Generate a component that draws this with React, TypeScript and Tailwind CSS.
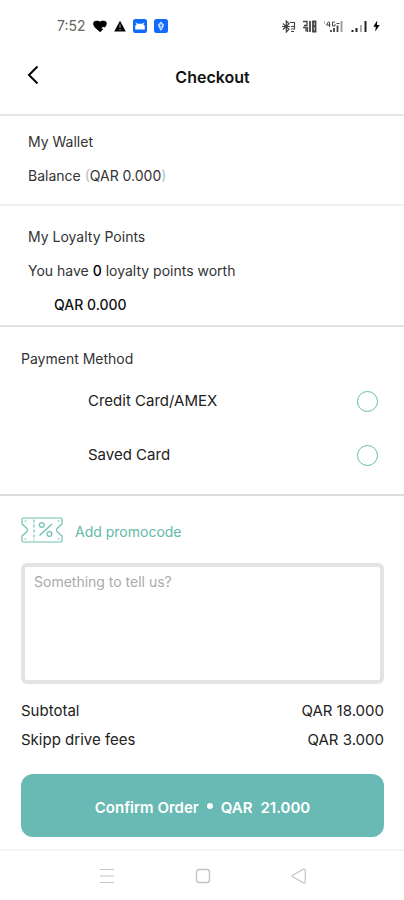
import { useState } from "react";

const methods = ["Credit Card/AMEX", "Saved Card"];

const fees = [
    { label: "Subtotal", value: "QAR 18.000" },
    { label: "Skipp drive fees", value: "QAR 3.000" },
];

// {Phone status bar}
const StatusBar = () => (
    <div className="flex h-[52px] items-center justify-between pl-[57px] pr-6 text-black">
        <div className="flex items-center gap-[7px]">
            <span className="text-sm leading-5 text-[#666]">7:52</span>

            <svg className="h-[13px] w-[14px]" viewBox="0 0 14 13" fill="currentColor">
                <path d="M7 1.800C8 .6 9 .8 10 .8 12.500.6 13.800 1.800 13.800 3.500 13.600 5.500 12.500 6.500 11.500 7.500L9.800 6.800 8.200 8.400 10.500 8.800 7.200 12.200 3.500 9C1.500 7.200 0 5.500.2 3.500.4 1.500 1.800.8 4 .8 5 .8 6 .8 7 1.800z" />
            </svg>

            <svg className="h-[12px] w-[12px]" viewBox="0 0 12 12">
                <path d="M6 .8 11.800 11.400H.2z" fill="currentColor" />
                <path d="M6 4.500v3.300M6 9v1.200" stroke="#bbb" strokeWidth="1" />
            </svg>

            <svg className="h-[14px] w-[14px]" viewBox="0 0 14 14">
                <rect width="14" height="14" rx="2.500" fill="#0f6bfd" />
                <path d="M2.200 10.500V6.800L3.600 5.400 2.400 3.600 5 4.700h4L11.600 3.600 10.400 5.400l1.400 1.400v3.700z" fill="#fff" />
            </svg>

            <svg className="h-[14px] w-[14px]" viewBox="0 0 14 14">
                <rect width="14" height="14" rx="2.500" fill="#0f6bfd" />
                <path d="M7 2.500 10.200 6 7.500 11.500h-1L3.800 6z" fill="#d9e8ff" />
                <path d="M7 4.500v5M5.500 6.300h3" stroke="#0f6bfd" strokeWidth=".8" />
            </svg>
        </div>

        <div className="flex items-center gap-[6px]">
            <svg className="h-[13px] w-[14px]" viewBox="0 0 14 13" fill="none" stroke="#444" strokeWidth="1.200">
                <path d="M1 3.500 7 9.200 4.300 12V1L7 3.800 1 9.500M0 6.500h8M8 2.500h4.500v4H9M9 9h3.500V6.500M9 11.500h3" />
            </svg>

            <svg className="h-[13px] w-[15px]" viewBox="0 0 15 13" fill="none" stroke="#444">
                <path d="M1 1.500h4v4H2M1 7.500h3v4M5.500 7v5" strokeWidth="1.300" />
                <path d="M8 1v11" strokeWidth="1.800" />
                <path d="M11 1.500h2.500v10H11zM11 6.200h3" strokeWidth="1.800" />
            </svg>

            <svg className="h-[13px] w-[22px]" viewBox="0 0 22 13" fill="none" stroke="#444">
                <path d="M5.500 1.500 3.500 5h4M6.500 2v5M12 2H9.500v4H12V4M13.500 3.500h3" strokeWidth="1" />
                <path d="M8 12v-2M11 12V8M14.500 12V5.500" strokeWidth="1.800" />
                <path d="M18.500 12V1" stroke="#999" strokeWidth="1.800" />
                <path d="M1.500 1v3" stroke="#bbb" strokeWidth="1" />
            </svg>

            <svg className="h-[13px] w-[16px]" viewBox="0 0 16 13" fill="none" stroke="#222" strokeWidth="2">
                <path d="M1.500 12v-2M5.500 12V8M14.500 12V1" />
                <path d="M10 12V5" stroke="#aaa" />
            </svg>

            <svg className="h-[12px] w-[7px]" viewBox="0 0 7 12" fill="currentColor">
                <path d="M4.200.5.3 6.700h2.500L2.200 11.500 6.700 5H4z" />
            </svg>
        </div>
    </div>
);

const TicketIcon = () => (
    <svg className="h-[26px] w-[42px]" viewBox="0 0 42 26" fill="none" stroke="#6fc2b0" strokeWidth="1.200">
        <path d="M2.500 1h37q1.500 0 1.500 1.500V7l-5 4.500q-1.200 1.500 0 3L41 19v4.500q0 1.500-1.500 1.500h-37Q1 25 1 23.500V19l5-4.500q1.200-1.500 0-3L1 7V2.500Q1 1 2.500 1z" />
        <path d="M13 2.500v21" strokeDasharray="3 2" />
        <path d="M31 7 18.500 18.500" strokeWidth="1.400" />
        <circle cx="20.800" cy="8" r="2.400" />
        <circle cx="28.500" cy="17" r="2.400" />
        <path d="M3.500 4h2M36.500 4h2M3.500 22h2M36.500 22h2" strokeWidth="1" />
    </svg>
);

const App = () => {
    const [method, setMethod] = useState("");
    const [note, setNote] = useState("");

    return (
        <div className="min-h-screen w-full bg-white font-['Inter',sans-serif] text-sm leading-5 text-[#333]">

            <StatusBar />

            {/* {Header} */}
            <header className="grid h-16 grid-cols-[1fr_auto_1fr] items-center border-b-2 border-[#e6e6e6] pb-3 pl-[27px] pr-1.5">
                <button aria-label="Back" className="justify-self-start pb-1 text-black">
                    <svg className="h-5 w-3" viewBox="0 0 12 20" fill="none" stroke="currentColor" strokeWidth="2">
                        <path d="M10.500 1.500 2 10l8.500 8.500" />
                    </svg>
                </button>
                <h1 className="text-base font-semibold leading-5 text-[#111]">Checkout</h1>
            </header>

            {/* {Wallet} */}
            <section className="flex flex-col gap-3.5 border-b-2 border-[#f0f0f0] px-7 pb-[18px] pt-4">
                <h2>My Wallet</h2>
                <p>Balance <span className="text-[#bbb]">(</span>QAR 0.000<span className="text-[#bbb]">)</span></p>
            </section>

            {/* {Loyalty} */}
            <section className="flex flex-col gap-3.5 border-b-2 border-[#e2e2e2] px-7 pb-2.5 pt-[21px]">
                <h2>My Loyalty Points</h2>
                <p>You have <span className="font-medium text-black">0</span> loyalty points worth</p>
                <p className="pl-[26px] font-medium text-[#111]">QAR 0.000</p>
            </section>

            {/* {Payment} */}
            <fieldset className="border-b-2 border-[#dcdcdc] px-[21px] pb-3 pt-[22px]">
                <legend className="float-left mb-[5px] w-full">Payment Method</legend>
                <div className="clear-both">
                    {methods.map((name) => (
                        <label key={name} className="flex h-[54px] items-center justify-between pl-[67px] pr-[5px] text-[15px] text-[#222]">
                            {name}
                            <input
                                type="radio"
                                name="method"
                                value={name}
                                checked={method === name}
                                onChange={() => setMethod(name)}
                                className="size-[21px] appearance-none rounded-full border border-[#62bfa6] checked:border-[6px]"
                            />
                        </label>
                    ))}
                </div>
            </fieldset>

            <div className="pl-[21px] pr-5 pt-[21px]">
                {/* {Promocode} */}
                <button className="flex items-center gap-3 text-[#62b9a8]">
                    <TicketIcon />
                    <span className="pt-1">Add promocode</span>
                </button>

                <textarea
                    aria-label="Something to tell us?"
                    placeholder="Something to tell us?"
                    value={note}
                    onChange={(e) => setNote(e.target.value)}
                    className="mt-5 block h-[121px] w-full resize-none rounded-md border-4 border-[#e1e4e3] px-[9px] py-[5px] placeholder:text-[#aaa]"
                />

                {/* {Fees} */}
                <dl className="mt-[17px] flex flex-col gap-[9px] text-[15px] text-[#222]">
                    {fees.map((fee) => (
                        <div key={fee.label} className="flex justify-between">
                            <dt>{fee.label}</dt>
                            <dd>{fee.value}</dd>
                        </div>
                    ))}
                </dl>

                <button className="mt-6 flex h-[63px] w-full items-center justify-center gap-2 rounded-xl bg-[#69b9b4] pt-1 text-[15px] font-semibold text-white">
                    <span>Confirm Order</span>
                    <span className="mb-1 size-1.5 rounded-full bg-white"></span>
                    <span>QAR</span>
                    <span>21.000</span>
                </button>
            </div>

            {/* {Android nav} */}
            <nav className="mt-3 flex h-[52px] items-center justify-center gap-20 border-t-2 border-[#f5f5f5] pl-px text-[#c4c4c4]">
                <button aria-label="Recent apps">
                    <svg className="size-4" viewBox="0 0 16 16" fill="none" stroke="currentColor" strokeWidth="1.200">
                        <path d="M1 1.500h14M1 8h14M1 14.500h14" />
                    </svg>
                </button>
                <button aria-label="Home">
                    <svg className="size-4" viewBox="0 0 16 16" fill="none" stroke="currentColor" strokeWidth="1.400">
                        <rect x="1.500" y="1.500" width="13" height="13" rx="2.500" />
                    </svg>
                </button>
                <button aria-label="Go back">
                    <svg className="size-4" viewBox="0 0 16 16" fill="none" stroke="currentColor" strokeWidth="1.200" strokeLinejoin="round">
                        <path d="M1.500 7.200 12.500 1.200q1.800-.5 1.800 1.300v11q0 1.800-1.800 1.300L1.500 8.800q-.8-.8 0-1.600z" />
                    </svg>
                </button>
            </nav>
        </div>
    );
};

export default App;
